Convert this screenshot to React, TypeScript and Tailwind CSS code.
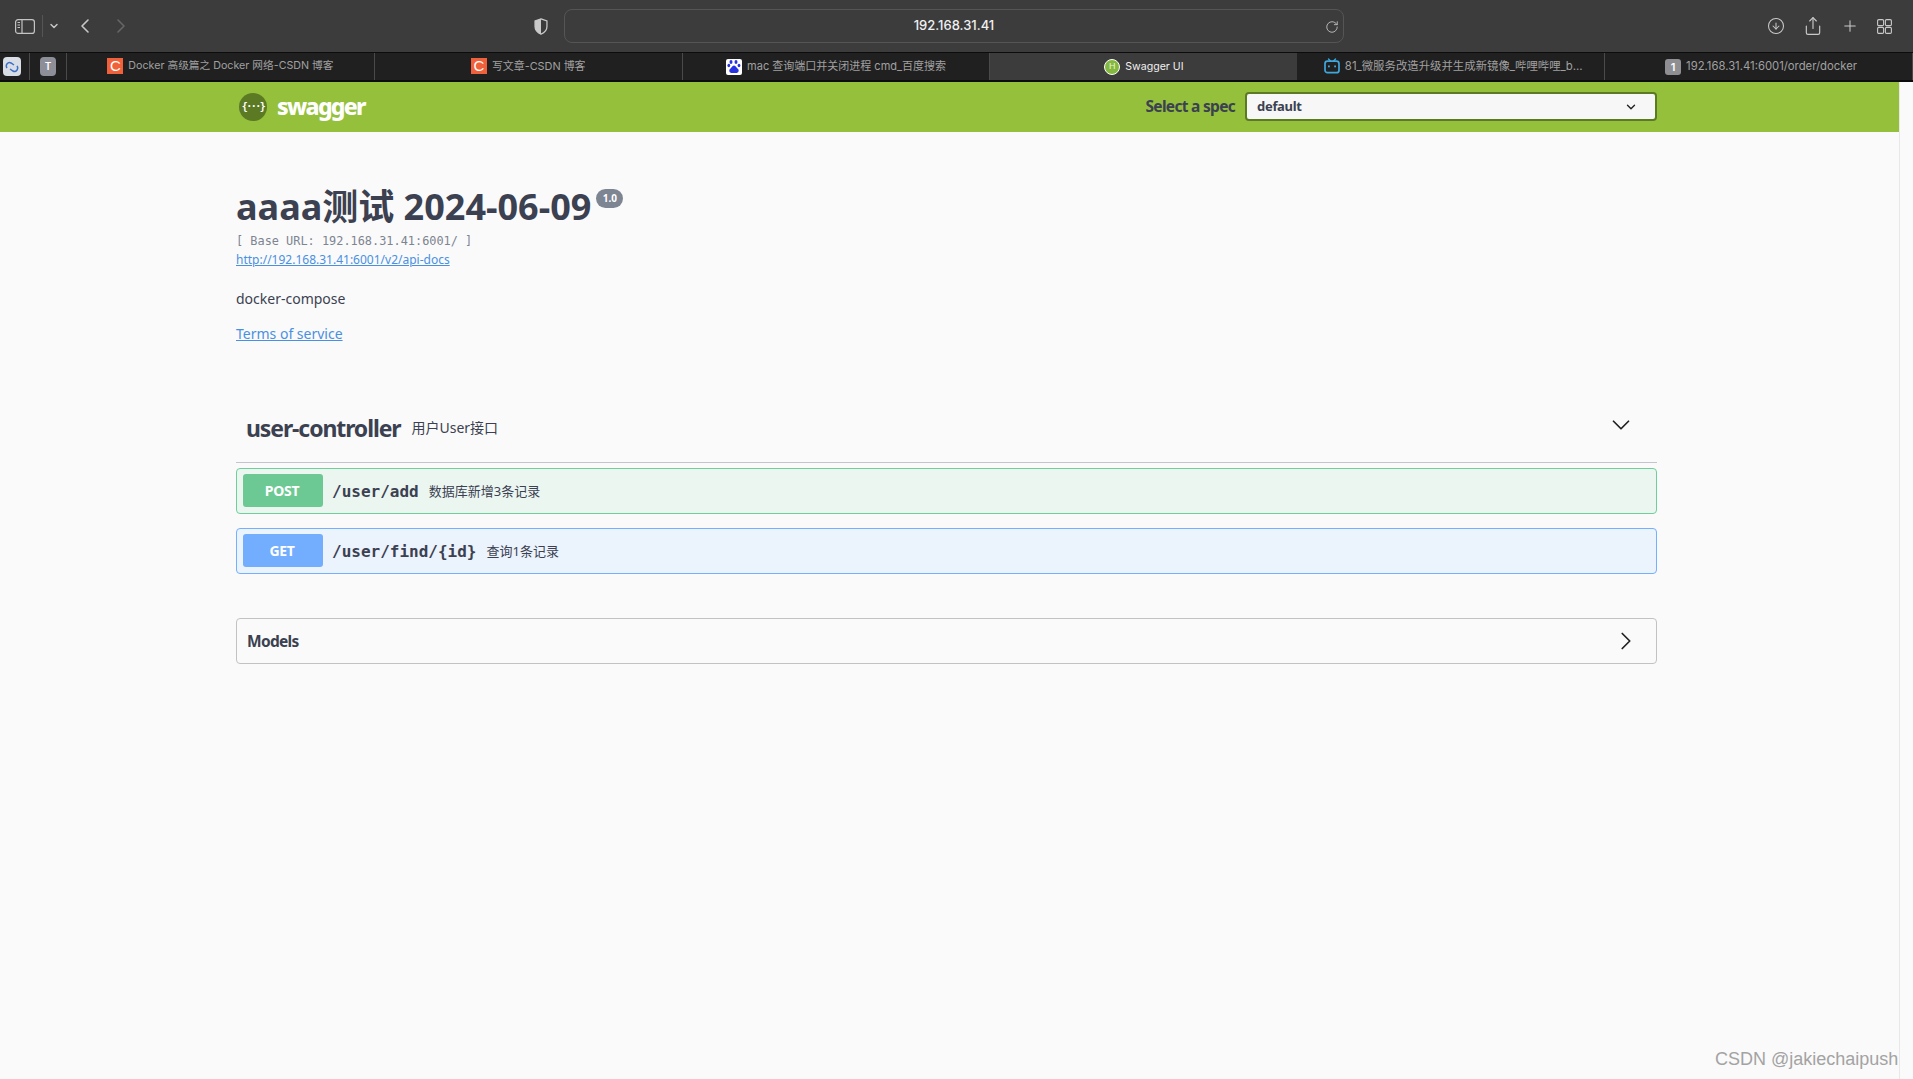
import { ChevronDown, ChevronLeft, ChevronRight, Plus, RotateCw, Share, CircleArrowDown } from 'lucide-react';

const NOTO = 'font-["Noto_Sans","Noto_Sans_CJK_SC",sans-serif]';

const SidebarIcon = () => (
  <svg width="20" height="15" viewBox="0 0 20 15" fill="none" stroke="#c4c4c4" strokeWidth="1.2">
    <rect x="0.6" y="0.6" width="18.8" height="13.8" rx="2.5" />
    <line x1="7" y1="0.6" x2="7" y2="14.4" />
    <path d="M2.5 3.5h2.5M2.5 6h2.5M2.5 8.5h2.5" />
  </svg>
);

const ShieldIcon = () => (
  <svg width="14" height="17" viewBox="0 0 16 20">
    <path d="M8 1 L15 3.5 V10 C15 14.5 11.5 17.5 8 19 C4.5 17.5 1 14.5 1 10 V3.5 Z" fill="none" stroke="#c9c9c9" strokeWidth="1.5" />
    <path d="M8 1 L1 3.5 V10 C1 14.5 4.5 17.5 8 19 Z" fill="#c9c9c9" />
  </svg>
);

const TabsIcon = () => (
  <svg width="15" height="15" viewBox="0 0 15 15" fill="none" stroke="#c9c9c9" strokeWidth="1.1">
    <rect x="0.6" y="0.6" width="6" height="6" rx="1.2" />
    <rect x="8.4" y="0.6" width="6" height="6" rx="1.2" />
    <rect x="0.6" y="8.4" width="6" height="6" rx="1.2" />
    <rect x="8.4" y="8.4" width="6" height="6" rx="1.2" />
  </svg>
);

const Toolbar = () => (
  <div className="h-[52px] bg-[#3c3c3c] flex items-center shrink-0">
    <div className="w-[564px] flex items-center pl-[15px]">
      <SidebarIcon />
      <div className="w-px h-[22px] bg-[#555] ml-[7px]" />
      <ChevronDown size={12} color="#c4c4c4" strokeWidth={3} className="ml-[5px]" />
      <ChevronLeft size={24} color="#c8c8c8" strokeWidth={1.6} className="ml-[13px]" />
      <ChevronRight size={24} color="#666" strokeWidth={1.6} className="ml-[12px]" />
      <div className="ml-auto mr-[16px] flex"><ShieldIcon /></div>
    </div>
    <div className="w-[780px] h-[34px] border border-[#555] rounded-[8px] flex items-center relative">
      <span className='flex-1 text-center text-[13px] font-medium text-[#f0f0f0] font-["Inter",sans-serif]'>192.168.31.41</span>
      <RotateCw size={14} color="#c4c4c4" strokeWidth={1.5} className="absolute right-[4px] top-[10px]" />
    </div>
    <div className="flex-1 flex items-center pl-[423px] gap-[18px]">
      <CircleArrowDown size={18} color="#c9c9c9" strokeWidth={1.4} />
      <Share size={20} color="#c9c9c9" strokeWidth={1.4} />
      <Plus size={18} color="#c9c9c9" strokeWidth={1.4} />
      <TabsIcon />
    </div>
  </div>
);

const CsdnIcon = () => (
  <span className='w-4 h-4 bg-[#f0603a] text-white text-[15px] leading-4 text-center font-["Liberation_Sans",sans-serif] shrink-0'>C</span>
);

const BaiduIcon = () => (
  <span className="w-4 h-4 bg-white rounded-[2px] flex items-center justify-center shrink-0">
    <svg width="14" height="15" viewBox="0 0 14 15" fill="#2932e1">
      <ellipse cx="4" cy="3" rx="1.5" ry="2" />
      <ellipse cx="9" cy="3" rx="1.5" ry="2" />
      <ellipse cx="1.8" cy="6.5" rx="1.4" ry="1.8" />
      <ellipse cx="12" cy="6.5" rx="1.4" ry="1.8" />
      <path d="M7 6.5 C5 6.5 4.5 9 3 10 C1.5 11.5 2.5 14 5 14 H9 C11.5 14 12.5 11.5 11 10 C9.5 9 9 6.5 7 6.5 Z" />
    </svg>
  </span>
);

const SwaggerFav = () => (
  <span className="w-4 h-4 rounded-full bg-[#85b83f] border border-white flex items-center justify-center shrink-0">
    <span className='text-[9px] leading-none text-[#e9f3da] font-["Liberation_Sans",sans-serif]'>H</span>
  </span>
);

const BiliIcon = () => (
  <svg width="16" height="16" viewBox="0 0 16 16" fill="none" className="shrink-0">
    <path d="M4.5 1 L6.5 3 M11.5 1 L9.5 3" stroke="#3fa7de" strokeWidth="1.4" strokeLinecap="round" />
    <rect x="1" y="3.2" width="14" height="11.5" rx="2.5" stroke="#3fa7de" strokeWidth="1.7" />
    <rect x="4" y="7.5" width="1.8" height="1.8" fill="#3fa7de" />
    <rect x="10.2" y="7.5" width="1.8" height="1.8" fill="#3fa7de" />
  </svg>
);

const NumIcon = () => (
  <span className='w-4 h-4 rounded-[3px] bg-[#8e8e93] text-white text-[11px] leading-4 text-center font-["Inter",sans-serif] font-semibold shrink-0'>1</span>
);

const Tab = ({ icon, title, size, active, nudge }: { icon: React.ReactNode; title: string; size: string; active?: boolean; nudge?: boolean }) => (
  <div className={`flex-1 min-w-0 flex items-center justify-center ${active ? 'bg-[#3c3c3c] text-[#f0f0f0]' : 'bg-[#202020] text-[#a0a0a0] border-r border-[#4a4a4a]'}`}>
    <div className={`flex items-center gap-[5px] ${nudge ? 'ml-[5px]' : ''}`}>
      {icon}
      <span className={`${size} whitespace-nowrap font-["Inter","Noto_Sans_CJK_SC",sans-serif]`}>{title}</span>
    </div>
  </div>
);

const TabBar = () => (
  <div className="h-[30px] shrink-0 flex bg-[#202020] border-t border-b-2 border-t-[#0c0c0c] border-b-[#0c0c0c]">
    <div className="w-[30px] flex items-center pl-[3px] border-r border-[#4a4a4a]">
      <span className="w-[18px] h-[19px] rounded-[4px] bg-[#d8dde6] flex items-center justify-center">
        <svg width="14" height="14" viewBox="0 0 14 14" fill="none" stroke="#3d6fc4" strokeWidth="1.5">
          <path d="M2 8 C0 5 3 1.5 6 3 L9 5" />
          <path d="M12 6 C14 9 11 12.5 8 11 L5 9" />
        </svg>
      </span>
    </div>
    <div className="w-[37px] flex items-center justify-center border-r border-[#4a4a4a]">
      <span className='w-4 h-[19px] rounded-[4px] bg-[#8e8e99] text-white text-[10px] font-semibold leading-[19px] text-center font-["Inter",sans-serif]'>T</span>
    </div>
    <div className="flex-1 flex min-w-0">
      <Tab icon={<CsdnIcon />} size="text-[10.7px]" title="Docker 高级篇之 Docker 网络-CSDN 博客" />
      <Tab icon={<CsdnIcon />} size="text-[10.9px]" title="写文章-CSDN 博客" />
      <Tab icon={<BaiduIcon />} size="text-[11px]" title="mac 查询端口并关闭进程 cmd_百度搜索" />
      <Tab icon={<SwaggerFav />} size="text-[10.6px]" title="Swagger UI" active />
      <Tab icon={<BiliIcon />} size="text-[11.4px]" title="81_微服务改造升级并生成新镜像_哔哩哔哩_b..." nudge />
      <Tab icon={<NumIcon />} size="text-[11.3px]" title="192.168.31.41:6001/order/docker" nudge />
    </div>
  </div>
);

const SwaggerHeader = () => (
  <div className={`h-[50px] bg-[#95c03c] flex items-center pl-[239px] pb-[1px] ${NOTO}`}>
    <span className="w-7 h-7 rounded-full bg-[#5c7a24] flex items-center justify-center">
      <span className='text-white text-[10px] font-bold leading-none font-["DejaVu_Sans_Mono",monospace] tracking-[-1.5px]'>{'{···}'}</span>
    </span>
    <span className="ml-[10px] text-white text-[23px] font-extrabold leading-none tracking-[-1.7px]">swagger</span>
    <span className="ml-auto mr-[10px] text-[#3b4151] text-[15.5px] font-bold tracking-[-0.7px]">Select a spec</span>
    <div className="w-[412px] h-[29px] mr-[242px] bg-[#f7f7f7] border-2 border-[#5c7a24] rounded-[4px] flex items-center pl-[10px] pr-[17px]">
      <span className="text-[#3b4151] text-[13px] font-bold tracking-[-0.3px]">default</span>
      <ChevronDown size={14} color="#222" strokeWidth={2.4} className="ml-auto" />
    </div>
  </div>
);

const Operation = ({ method, path, desc, border, bg, badge }: { method: string; path: string; desc: string; border: string; bg: string; badge: string }) => (
  <div className={`h-[46px] rounded-[4px] border-[1.5px] flex items-center pl-[6px] ${border} ${bg}`}>
    <span className={`w-[80px] h-[33px] rounded-[3px] text-white text-[14px] font-bold tracking-[-0.3px] pr-[2px] flex items-center justify-center ${badge}`}>{method}</span>
    <span className='ml-[9px] pt-[2px] text-[#3b4151] text-[16px] font-semibold font-["DejaVu_Sans_Mono",monospace]'>{path}</span>
    <span className="ml-[10px] pt-[2px] text-[#3b4151] text-[13px]">{desc}</span>
  </div>
);

const Content = () => (
  <div className={`pl-[236px] w-[1657px] text-[#3b4151] ${NOTO}`}>
    <div className="flex items-start pt-[51px]">
      <h1 className="text-[36px] leading-[48px] font-bold">aaaa测试 2024-06-09</h1>
      <span className="ml-[5px] mt-[6px] h-[19px] w-[27px] rounded-full bg-[#7d8492] text-white text-[10px] font-bold flex items-center justify-center">1.0</span>
    </div>
    <div className='mt-[2px] h-[16px] leading-[16px] text-[11.9px] text-[#7d8492] font-["DejaVu_Sans_Mono",monospace]'>[ Base URL: 192.168.31.41:6001/ ]</div>
    <a className="block mt-[3px] h-[16px] leading-[16px] text-[12px] text-[#4990e2] underline">http://192.168.31.41:6001/v2/api-docs</a>
    <p className="mt-[21px] h-[20px] leading-[20px] text-[14px]">docker-compose</p>
    <a className="block mt-[15px] h-[20px] leading-[20px] text-[14px] text-[#4990e2] underline">Terms of service</a>

    <div className="mt-[38.5px] h-[80px] flex items-center pl-[10px] pr-[21px] border-b border-[#c4c4cc] pt-[13px]">
      <span className="text-[23px] font-bold tracking-[-1.1px]">user-controller</span>
      <span className="ml-[11px] text-[14px] mb-[2px]">用户User接口</span>
      <ChevronDown size={30} color="#222" strokeWidth={1.4} className="ml-auto mb-[8px]" />
    </div>
    <div className="mt-[5px] flex flex-col gap-[14px]">
      <Operation method="POST" path="/user/add" desc="数据库新增3条记录" border="border-[#6fcf9a]" bg="bg-[#ecf6f1]" badge="bg-[#6dc994]" />
      <Operation method="GET" path="/user/find/{id}" desc="查询1条记录" border="border-[#75afff]" bg="bg-[#ebf3fc]" badge="bg-[#73adfe]" />
    </div>
    <div className="mt-[44px] h-[46px] border border-[#c2c2c2] rounded-[4px] flex items-center pl-[10px] pr-[15px]">
      <span className="pt-[2px] text-[15.5px] font-bold tracking-[-0.7px]">Models</span>
      <ChevronRight size={30} color="#222" strokeWidth={1.4} className="ml-auto" />
    </div>
  </div>
);

export default function App() {
  return (
    <div className="relative h-[1079px] w-[1913px] overflow-hidden flex flex-col bg-[#fafafa]">
      <Toolbar />
      <TabBar />
      <div className="flex-1 flex min-h-0">
        <div className="w-[1899px] flex flex-col">
          <SwaggerHeader />
          <Content />
        </div>
        <div className="flex-1 border-l border-[#e8e8e8] bg-[#fafafa]" />
      </div>
      <span className='absolute left-[1715px] top-[1049px] text-[18px] leading-[20px] text-[#a3a3a3] font-["Liberation_Sans",sans-serif]'>CSDN @jakiechaipush</span>
    </div>
  );
}
